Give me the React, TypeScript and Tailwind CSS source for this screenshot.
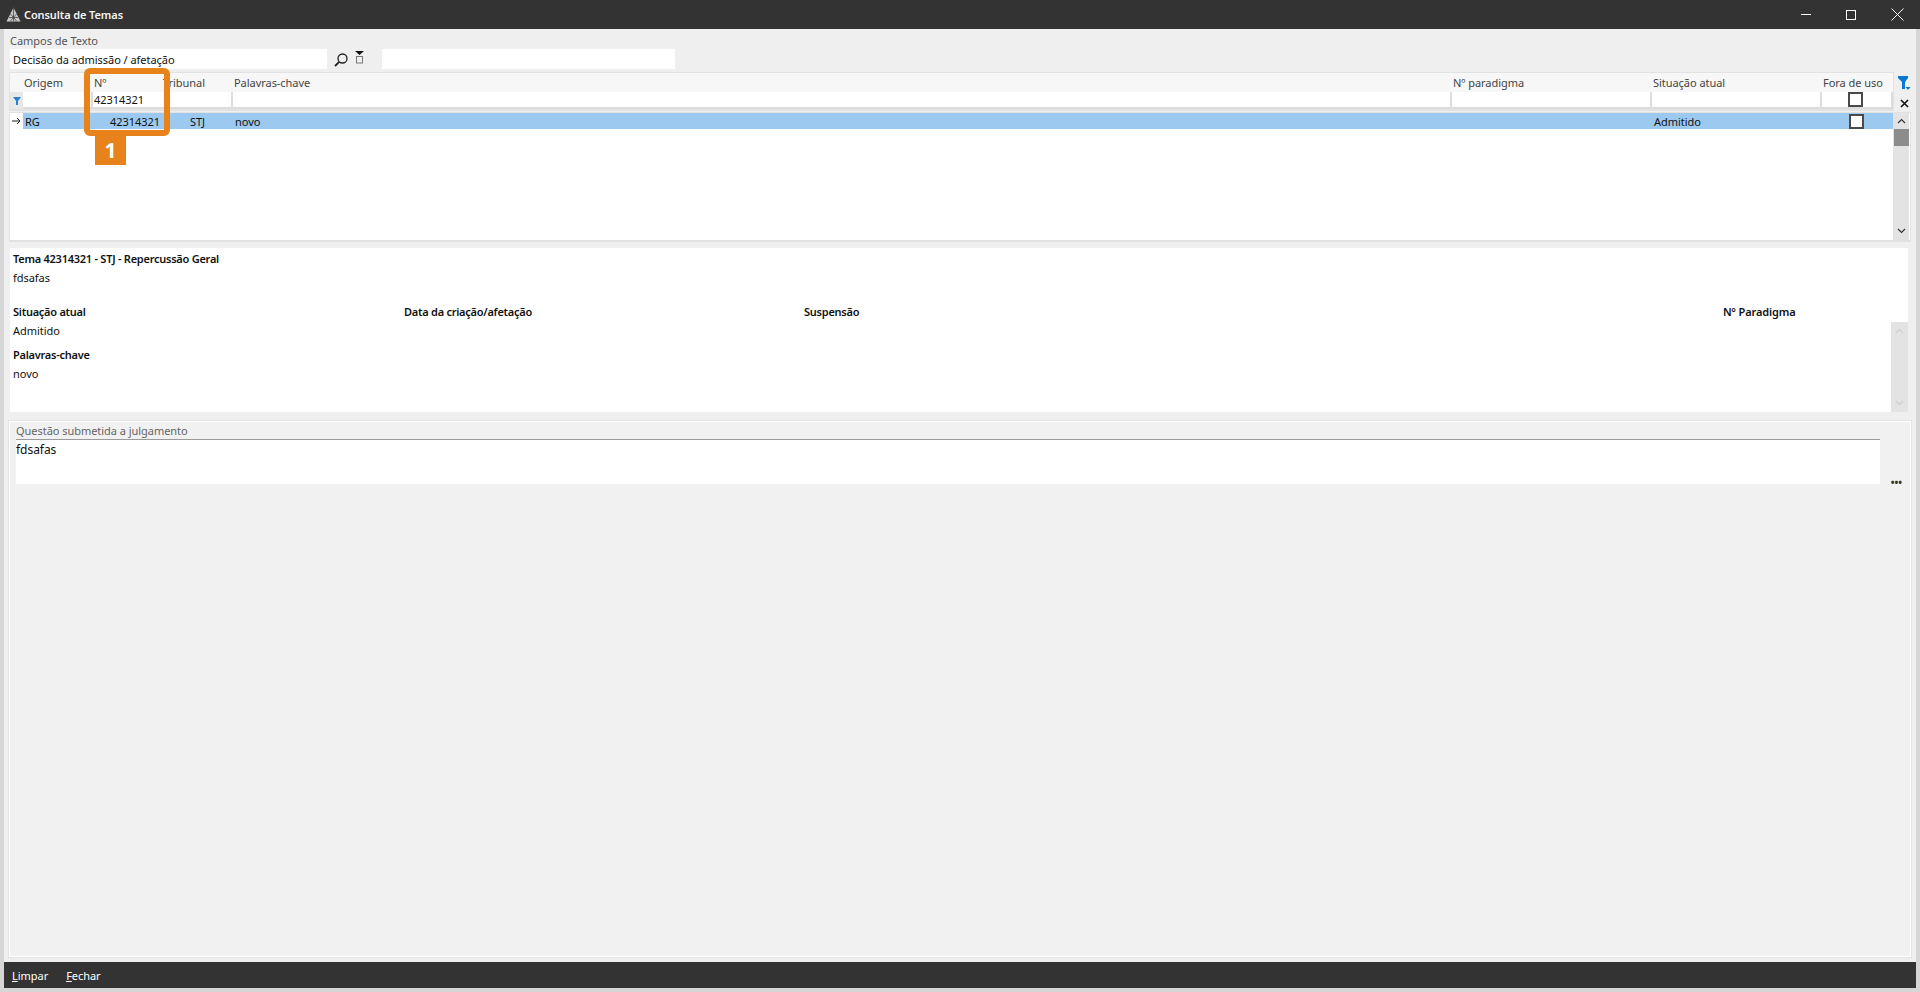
import React from "react";

const font = { fontFamily: '"Noto Sans", "Open Sans", sans-serif' };

function Check() {
  return <span className="block w-[15px] h-[15px] border-[2px] border-[#4a4a4a] bg-white" />;
}

function Logo() {
  return (
    <svg width="15" height="15" viewBox="0 0 15 15" className="shrink-0">
      <path d="M7.5 0.5 L14.5 14.5 H0.5 Z" fill="#c9c9c9" />
      <path d="M7.5 1 V14 M4.5 7 L10.5 14 M10.5 7 L4.5 14 M3 10.5 H12" stroke="#333" strokeWidth="0.7" fill="none" />
    </svg>
  );
}

function Search() {
  return (
    <svg width="14" height="14" viewBox="0 0 14 14" className="shrink-0">
      <circle cx="8.5" cy="5.5" r="4.5" fill="none" stroke="#222" strokeWidth="1.3" />
      <path d="M5.2 8.8 L1 13" stroke="#222" strokeWidth="1.8" />
    </svg>
  );
}

function PickIcon() {
  return (
    <svg width="9" height="13" viewBox="0 0 9 13" className="shrink-0">
      <path d="M0 0 H9 L4.5 4 Z" fill="#111" />
      <rect x="1.5" y="5.5" width="6" height="6.5" fill="none" stroke="#777" />
    </svg>
  );
}

function Funnel({ small }: { small?: boolean }) {
  return small ? (
    <svg width="8" height="8" viewBox="0 0 8 8">
      <path d="M0 0 H8 L5 4 V8 H3 V4 Z" fill="#2a7fd4" />
    </svg>
  ) : (
    <svg width="13" height="15" viewBox="0 0 13 15">
      <path d="M0 0 H10 V2 L7 6 V13 H4 V6 L0 2 Z" fill="#0a78d2" />
      <path d="M7.5 11 H12.5 L10 14 Z" fill="#0a78d2" />
    </svg>
  );
}

function Chevron({ up, color = "#333" }: { up?: boolean; color?: string }) {
  return (
    <svg width="9" height="6" viewBox="0 0 9 6">
      <path d={up ? "M1 5 L4.5 1.5 L8 5" : "M1 1 L4.5 4.5 L8 1"} fill="none" stroke={color} strokeWidth="1.1" />
    </svg>
  );
}

const cols = "grid grid-cols-[13px_70px_73px_67px_1219px_200px_170px_71px]";
const cell = "h-[17px] bg-white border-2 border-[#dcdcdc] border-t-0 border-l-0";
const head = "font-semibold tracking-[-0.25px]";

export default function App() {
  return (
    <div style={font} className="relative w-[1920px] h-[992px] flex flex-col bg-[#d6d6d6] text-[11px] leading-[15px] tracking-[-0.04px] text-[#111] overflow-hidden">
      {/* Title bar */}
      <div className="h-[29px] shrink-0 bg-[#333333] flex items-center text-white">
        <div className="ml-[6px] mr-[3px] flex"><Logo /></div>
        <span className="font-semibold text-[11px] tracking-[-0.1px] text-[#f2f2f2]">Consulta de Temas</span>
        <div className="ml-auto flex items-center">
          <span className="block w-[10px] h-px bg-white mr-[35px]" />
          <span className="block w-[10px] h-[10px] border border-white mr-[35px]" />
          <svg width="13" height="13" viewBox="0 0 13 13" className="mr-[16px]">
            <path d="M0.5 0.5 L12.5 12.5 M12.5 0.5 L0.5 12.5" stroke="#fff" strokeWidth="1" />
          </svg>
        </div>
      </div>

      {/* Body */}
      <div className="h-[933px] shrink-0 mx-[4px] bg-[#efefef] flex flex-col">
        {/* Campos */}
        <div className="h-[20px] pl-[6px] pt-[4px] text-[#555] shrink-0">Campos de Texto</div>
        <div className="h-[20px] shrink-0 flex items-center pl-[6px]">
          <div className="w-[317px] h-[20px] bg-white flex items-center pl-[3px]">Decisão da admissão / afetação</div>
          <div className="ml-[7px] mt-[2px] flex"><Search /></div>
          <div className="ml-[7px] -mt-[3px] flex"><PickIcon /></div>
          <div className="ml-[18px] w-[293px] h-[20px] bg-white" />
        </div>

        {/* Grid */}
        <div className="h-[172px] mt-[3px] shrink-0 flex flex-col pl-[5px]">
          <div className="flex h-[40px] shrink-0">
            <div className="w-[1885px] h-[39px] border border-[#e2e2e2] border-b-2 bg-[#f7f7f7] shrink-0">
              <div className={`${cols} h-[19px] text-[#444] items-center`}>
                <span />
                <span className="pl-[1px]">Origem</span>
                <span className="pl-[1px]">Nº</span>
                <span className="-ml-[3px]">Tribunal</span>
                <span className="pl-[1px]">Palavras-chave</span>
                <span className="pl-[1px]">Nº paradigma</span>
                <span className="pl-[1px]">Situação atual</span>
                <span className="pl-[1px]">Fora de uso</span>
              </div>
              <div className={cols}>
                <span className="flex items-center justify-center h-[17px] bg-[#e8e8e8]"><Funnel small /></span>
                <span className={cell} />
                <span className={`${cell} pl-[1px] text-[#111] flex items-center`}>42314321</span>
                <span className={cell} />
                <span className={cell} />
                <span className={cell} />
                <span className={cell} />
                <span className={`${cell} flex items-center justify-center pr-[3px]`}><Check /></span>
              </div>
            </div>
            <div className="ml-[4px] flex flex-col items-center w-[13px]">
              <div className="mt-[4px] flex"><Funnel /></div>
              <svg width="9" height="9" viewBox="0 0 9 9" className="mt-[8px]"><path d="M1 1 L8 8 M8 1 L1 8" stroke="#111" strokeWidth="1.6" /></svg>
            </div>
          </div>
          <div className="relative w-[1902px] h-[130px] border border-[#e2e2e2] border-b-2 bg-white">
            <div className={`${cols} h-[16px] items-center`}>
              <span className="flex items-center justify-center bg-white">
                <svg width="9" height="8" viewBox="0 0 9 8"><path d="M0 4 H8 M5 1 L8 4 L5 7" fill="none" stroke="#222" strokeWidth="1" /></svg>
              </span>
              <span className="bg-[#9bc9ef] h-[16px] pl-[2px] flex items-center">RG</span>
              <span className="bg-[#9bc9ef] h-[16px] pr-[6px] flex items-center justify-end">42314321</span>
              <span className="bg-[#9bc9ef] h-[16px] pr-[28px] flex items-center justify-end">STJ</span>
              <span className="bg-[#9bc9ef] h-[16px] pl-[2px] flex items-center">novo</span>
              <span className="bg-[#9bc9ef] h-[16px]" />
              <span className="bg-[#9bc9ef] h-[16px] pl-[2px] flex items-center">Admitido</span>
              <span className="bg-[#9bc9ef] h-[16px] flex items-center justify-center pr-[3px]"><Check /></span>
            </div>
            <div className="absolute right-[1px] top-0 bottom-0 w-[16px] bg-[#e3e3e3] flex flex-col items-center">
              <div className="h-[16px] flex items-center justify-center"><Chevron up /></div>
              <div className="w-[15px] h-[17px] bg-[#8c8c8c]" />
              <div className="mt-auto h-[18px] flex items-center justify-center"><Chevron /></div>
            </div>
          </div>
        </div>

        {/* Detail */}
        <div className="relative h-[164px] mt-[4px] ml-[6px] mr-[8px] shrink-0 bg-white pl-[3px] pt-[1px]">
          <div className={`h-[19px] flex items-center ${head}`}>Tema 42314321 - STJ - Repercussão Geral</div>
          <div className="h-[19px] flex items-center">fdsafas</div>
          <div className={`h-[34px] grid grid-cols-[391px_400px_919px_1fr] items-end pb-[1px] mt-[-1px] ${head}`}>
            <span>Situação atual</span>
            <span>Data da criação/afetação</span>
            <span>Suspensão</span>
            <span className="tracking-[-0.1px]">Nº Paradigma</span>
          </div>
          <div className="h-[20px] flex items-center">Admitido</div>
          <div className={`h-[23px] mt-[1px] flex items-center pt-[4px] ${head}`}>Palavras-chave</div>
          <div className="h-[19px] flex items-center">novo</div>
          <div className="absolute right-0 top-[74px] bottom-0 w-[17px] bg-[#e3e3e3] flex flex-col items-center justify-between py-[6px]">
            <Chevron up color="#cfcfcf" />
            <Chevron color="#cfcfcf" />
          </div>
        </div>

        {/* Group */}
        <div className="relative h-[538px] mt-[8px] ml-[4px] mr-[4px] shrink-0 border border-[#e4e4e4]">
          <div className="h-full border border-white bg-[#f1f1f1] flex flex-col pl-[6px] pr-[30px]">
            <div className="h-[17px] shrink-0 pt-[1px] text-[#666] leading-[15px]">Questão submetida a julgamento</div>
            <div className="h-[45px] bg-white border-t border-[#9a9a9a] text-[12px] pt-[2px] leading-[16px]">fdsafas</div>
          </div>
          <span className="absolute right-[9px] top-[56px] text-[#333] text-[10px] font-bold leading-[10px]">•••</span>
        </div>
      </div>

      {/* Bottom bar */}
      <div className="h-[26px] shrink-0 mx-[4px] bg-[#333333] text-white flex items-center pl-[8px] gap-[18px]">
        <span><span className="underline">L</span>impar</span>
        <span><span className="underline">F</span>echar</span>
      </div>

      {/* Annotation */}
      <div className="absolute left-[84px] top-[68px] w-[86px] h-[68px] border-[6px] border-[#e8821a] rounded-[6px]" />
      <div className="absolute left-[95px] top-[136px] w-[31px] h-[29px] bg-[#e8821a] text-white text-[21px] font-bold flex items-center justify-center">1</div>
    </div>
  );
}
